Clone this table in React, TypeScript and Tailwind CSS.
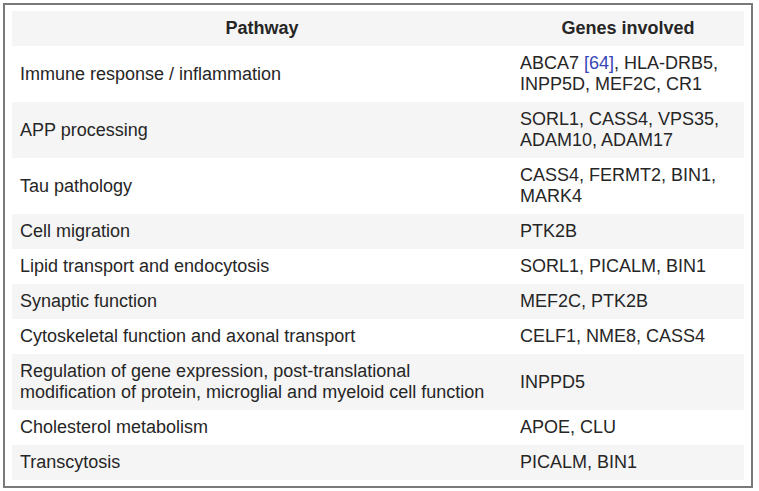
import React from "react";

const rows: { pathway: string; genes: React.ReactNode }[] = [
  {
    pathway: "Immune response / inflammation",
    genes: (
      <>
        ABCA7 <a className="text-[#3645b5]">[64]</a>, HLA-DRB5, INPP5D, MEF2C, CR1
      </>
    ),
  },
  { pathway: "APP processing", genes: "SORL1, CASS4, VPS35, ADAM10, ADAM17" },
  { pathway: "Tau pathology", genes: "CASS4, FERMT2, BIN1, MARK4" },
  { pathway: "Cell migration", genes: "PTK2B" },
  { pathway: "Lipid transport and endocytosis", genes: "SORL1, PICALM, BIN1" },
  { pathway: "Synaptic function", genes: "MEF2C, PTK2B" },
  { pathway: "Cytoskeletal function and axonal transport", genes: "CELF1, NME8, CASS4" },
  {
    pathway:
      "Regulation of gene expression, post-translational modification of protein, microglial and myeloid cell function",
    genes: "INPPD5",
  },
  { pathway: "Cholesterol metabolism", genes: "APOE, CLU" },
  { pathway: "Transcytosis", genes: "PICALM, BIN1" },
];

export default function App() {
  return (
    <div className="w-[759px] h-[491px] bg-white pt-[3px] pl-[3px] font-['Liberation_Sans',Arial,sans-serif] text-[18px] leading-[21px] text-[#262626]">
      <div className="w-[750px] h-[485px] border-2 border-[#7a7a7a] pt-[6px] pl-[7px]">
        <table className="w-[732px] border-collapse table-fixed">
          <colgroup>
            <col className="w-[500px]" />
            <col className="w-[232px]" />
          </colgroup>
          <thead>
            <tr className="bg-[#f5f5f5]">
              <th className="px-2 py-[7px] font-bold text-center">Pathway</th>
              <th className="px-2 py-[7px] font-bold text-center">Genes involved</th>
            </tr>
          </thead>
          <tbody>
            {rows.map((r, i) => (
              <tr key={r.pathway} className={i % 2 === 1 ? "bg-[#f5f5f5]" : "bg-white"}>
                <td className="px-2 py-[7px] align-middle">{r.pathway}</td>
                <td className="px-2 py-[7px] align-middle">{r.genes}</td>
              </tr>
            ))}
          </tbody>
        </table>
      </div>
    </div>
  );
}
